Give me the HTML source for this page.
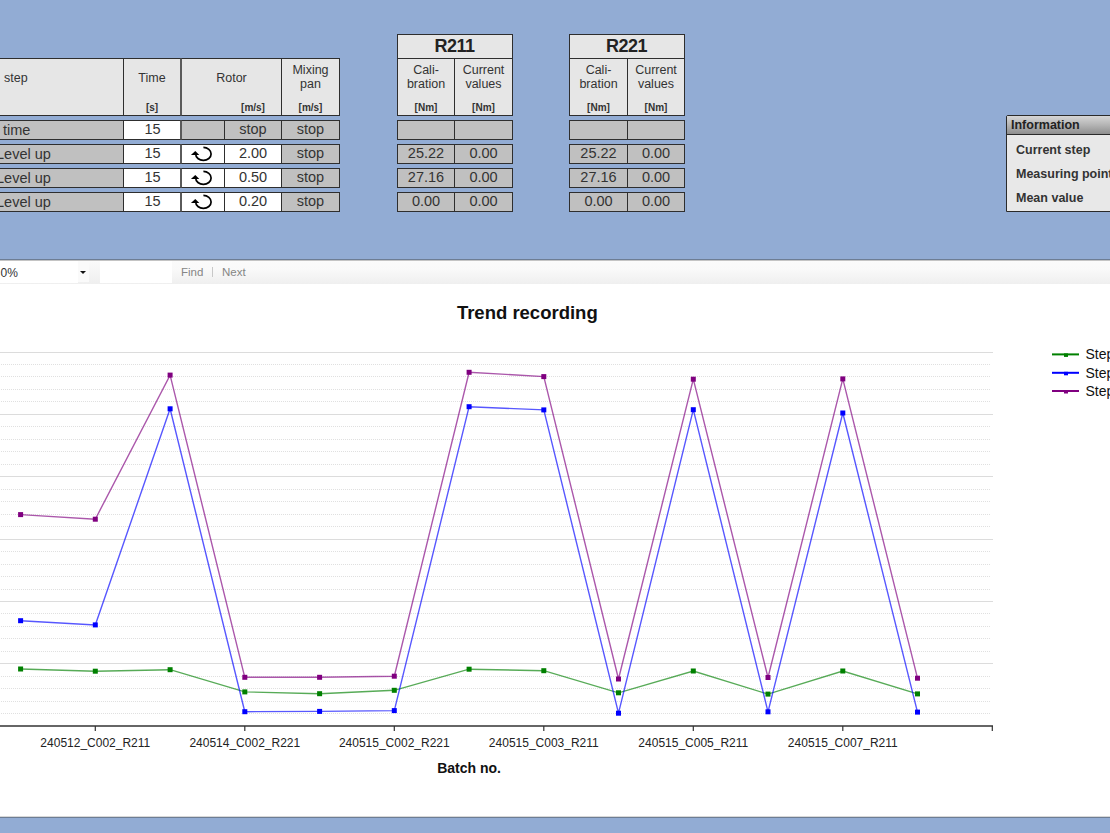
<!DOCTYPE html>
<html><head><meta charset="utf-8">
<style>
*{margin:0;padding:0;box-sizing:border-box}
html,body{width:1110px;height:833px;overflow:hidden;background:#92acd4;font-family:"Liberation Sans",sans-serif;color:#333}
.a{position:absolute}
.c{position:absolute;border:1px solid #2e2e2e;overflow:hidden;white-space:nowrap}
.hd{background:#e6e6e6}
.g{background:#c0c0c0}
.w{background:#fff}
.v{font-size:14.5px;line-height:17px;text-align:center;color:#333}
.ht{font-size:12.5px;margin-top:-1px;text-align:center;color:#333;position:absolute;left:0;right:0;line-height:14px}
.u{font-size:10px;margin-top:-2px;font-weight:bold;text-align:center;color:#333;position:absolute;left:0;right:0;line-height:11px}
</style></head><body>
<div class="c hd" style="left:-60px;top:58px;width:184px;height:58px"><div class="a" style="left:63px;top:12px;font-size:12.5px;color:#333">step</div></div>
<div class="c hd" style="left:123px;top:58px;width:58px;height:58px;border-right-color:#5a5a5a"><div class="ht" style="top:13px">Time</div><div class="u" style="top:103px;top:45px">[s]</div></div>
<div class="c hd" style="left:181px;top:58px;width:101px;height:58px;border-left-color:#5a5a5a"><div class="ht" style="top:13px">Rotor</div><div class="u" style="top:45px;left:43px">[m/s]</div></div>
<div class="c hd" style="left:281px;top:58px;width:59px;height:58px"><div class="ht" style="top:5px">Mixing<br>pan</div><div class="u" style="top:45px">[m/s]</div></div>
<div class="c g" style="left:-60px;top:120px;width:184px;height:20px"><div class="a v" style="left:62px;top:1px;text-align:left;font-size:14.5px">time</div></div>
<div class="c w v" style="left:123px;top:120px;width:58px;height:20px;border-right-color:#5a5a5a;padding-left:1px">15</div>
<div class="c g" style="left:181px;top:120px;width:44px;height:20px;border-left-color:#5a5a5a"></div>
<div class="c g v" style="left:224px;top:120px;width:58px;height:20px">stop</div>
<div class="c g v" style="left:281px;top:120px;width:59px;height:20px">stop</div>
<div class="c g" style="left:-60px;top:144px;width:184px;height:20px"><div class="a v" style="left:55px;top:1px;text-align:left;font-size:14.5px">Level up</div></div>
<div class="c w v" style="left:123px;top:144px;width:58px;height:20px;border-right-color:#5a5a5a;padding-left:1px">15</div>
<div class="c w" style="left:181px;top:144px;width:44px;height:20px;border-left-color:#5a5a5a"><svg width="42" height="18" viewBox="0 0 42 18" style="position:absolute;left:0;top:0">
<path d="M21.4 2.4 A7.7 6.5 0 1 1 13.7 8.9" fill="none" stroke="#000" stroke-width="1.7"/>
<path d="M8.9 10.1 L13.3 5.9 L17.3 10.1 Z" fill="#000"/>
</svg></div>
<div class="c w v" style="left:224px;top:144px;width:58px;height:20px">2.00</div>
<div class="c g v" style="left:281px;top:144px;width:59px;height:20px">stop</div>
<div class="c g" style="left:-60px;top:168px;width:184px;height:20px"><div class="a v" style="left:55px;top:1px;text-align:left;font-size:14.5px">Level up</div></div>
<div class="c w v" style="left:123px;top:168px;width:58px;height:20px;border-right-color:#5a5a5a;padding-left:1px">15</div>
<div class="c w" style="left:181px;top:168px;width:44px;height:20px;border-left-color:#5a5a5a"><svg width="42" height="18" viewBox="0 0 42 18" style="position:absolute;left:0;top:0">
<path d="M21.4 2.4 A7.7 6.5 0 1 1 13.7 8.9" fill="none" stroke="#000" stroke-width="1.7"/>
<path d="M8.9 10.1 L13.3 5.9 L17.3 10.1 Z" fill="#000"/>
</svg></div>
<div class="c w v" style="left:224px;top:168px;width:58px;height:20px">0.50</div>
<div class="c g v" style="left:281px;top:168px;width:59px;height:20px">stop</div>
<div class="c g" style="left:-60px;top:192px;width:184px;height:20px"><div class="a v" style="left:55px;top:1px;text-align:left;font-size:14.5px">Level up</div></div>
<div class="c w v" style="left:123px;top:192px;width:58px;height:20px;border-right-color:#5a5a5a;padding-left:1px">15</div>
<div class="c w" style="left:181px;top:192px;width:44px;height:20px;border-left-color:#5a5a5a"><svg width="42" height="18" viewBox="0 0 42 18" style="position:absolute;left:0;top:0">
<path d="M21.4 2.4 A7.7 6.5 0 1 1 13.7 8.9" fill="none" stroke="#000" stroke-width="1.7"/>
<path d="M8.9 10.1 L13.3 5.9 L17.3 10.1 Z" fill="#000"/>
</svg></div>
<div class="c w v" style="left:224px;top:192px;width:58px;height:20px">0.20</div>
<div class="c g v" style="left:281px;top:192px;width:59px;height:20px">stop</div>
<div class="c hd" style="left:397px;top:34px;width:116px;height:25px;font-size:18px;font-weight:bold;text-align:center;line-height:22px;color:#222;letter-spacing:-0.5px;text-indent:-1px">R211</div>
<div class="c hd" style="left:397px;top:58px;width:58px;height:58px"><div class="ht" style="top:5px;font-size:12.5px">Cali-<br>bration</div><div class="u" style="top:45px">[Nm]</div></div>
<div class="c hd" style="left:454px;top:58px;width:59px;height:58px"><div class="ht" style="top:5px;font-size:12.5px">Current<br>values</div><div class="u" style="top:45px">[Nm]</div></div>
<div class="c g v" style="left:397px;top:120px;width:58px;height:20px"></div>
<div class="c g v" style="left:454px;top:120px;width:59px;height:20px"></div>
<div class="c g v" style="left:397px;top:144px;width:58px;height:20px">25.22</div>
<div class="c g v" style="left:454px;top:144px;width:59px;height:20px">0.00</div>
<div class="c g v" style="left:397px;top:168px;width:58px;height:20px">27.16</div>
<div class="c g v" style="left:454px;top:168px;width:59px;height:20px">0.00</div>
<div class="c g v" style="left:397px;top:192px;width:58px;height:20px">0.00</div>
<div class="c g v" style="left:454px;top:192px;width:59px;height:20px">0.00</div>
<div class="c hd" style="left:569px;top:34px;width:116px;height:25px;font-size:18px;font-weight:bold;text-align:center;line-height:22px;color:#222;letter-spacing:-0.5px;text-indent:-1px">R221</div>
<div class="c hd" style="left:569px;top:58px;width:59px;height:58px"><div class="ht" style="top:5px;font-size:12.5px">Cali-<br>bration</div><div class="u" style="top:45px">[Nm]</div></div>
<div class="c hd" style="left:627px;top:58px;width:58px;height:58px"><div class="ht" style="top:5px;font-size:12.5px">Current<br>values</div><div class="u" style="top:45px">[Nm]</div></div>
<div class="c g v" style="left:569px;top:120px;width:59px;height:20px"></div>
<div class="c g v" style="left:627px;top:120px;width:58px;height:20px"></div>
<div class="c g v" style="left:569px;top:144px;width:59px;height:20px">25.22</div>
<div class="c g v" style="left:627px;top:144px;width:58px;height:20px">0.00</div>
<div class="c g v" style="left:569px;top:168px;width:59px;height:20px">27.16</div>
<div class="c g v" style="left:627px;top:168px;width:58px;height:20px">0.00</div>
<div class="c g v" style="left:569px;top:192px;width:59px;height:20px">0.00</div>
<div class="c g v" style="left:627px;top:192px;width:58px;height:20px">0.00</div>
<div class="a" style="left:1006px;top:115px;width:120px;height:97px;border:1px solid #2a2a2a;background:#e8e8e8;border-radius:2px 0 0 0">
<div class="a" style="left:0;top:0;right:0;height:19px;background:linear-gradient(#d6d6d6,#b4b4b4 50%,#8e8e8e);border-bottom:1px solid #2a2a2a;font-size:12.5px;font-weight:bold;color:#222;padding-left:4px;line-height:18px">Information</div>
<div class="a" style="left:9px;top:22px;font-size:12.5px;font-weight:bold;color:#333;line-height:24px">Current step<br>Measuring point<br>Mean value</div>
</div>
<div class="a" style="left:0;top:259px;width:1110px;height:1px;background:#6d7d94"></div>
<div class="a" style="left:0;top:260px;width:1110px;height:24px;background:linear-gradient(#fbfbfb,#f9f9f9 40%,#efefef)"></div>
<div class="a" style="left:0;top:260px;width:1110px;height:1px;background:#c4c4c4"></div>
<div class="a" style="left:0;top:261px;width:78px;height:22px;background:#fff"></div>
<div class="a" style="left:0.5px;top:266px;font-size:12px;color:#333;line-height:14px">0%</div>
<div class="a" style="left:78px;top:262px;width:11px;height:20px;background:#fafafa"></div>
<div class="a" style="left:80px;top:271px;width:0;height:0;border-left:3px solid transparent;border-right:3px solid transparent;border-top:3.5px solid #111"></div>
<div class="a" style="left:89px;top:262px;width:11px;height:21px;background:linear-gradient(#fafafa,#efefef)"></div>
<div class="a" style="left:100px;top:261px;width:72px;height:22px;background:#fff"></div>
<div class="a" style="left:181px;top:265px;font-size:11.5px;color:#858585;line-height:14px">Find</div>
<div class="a" style="left:212px;top:267px;width:1px;height:10px;background:#c8c8c8"></div>
<div class="a" style="left:222px;top:265px;font-size:11.5px;color:#858585;line-height:14px">Next</div>
<div class="a" style="left:0;top:284px;width:1110px;height:532px;background:#fff"></div>
<div class="a" style="left:0;top:816px;width:1110px;height:1px;background:#d8d8d8"></div>
<div class="a" style="left:0;top:817px;width:1110px;height:1px;background:#6d7d94"></div>
<svg class="a" style="left:0;top:0" width="1110" height="833" viewBox="0 0 1110 833" font-family="Liberation Sans, sans-serif">
<line x1="0" y1="352.5" x2="993" y2="352.5" stroke="#dcdcdc" stroke-width="1"/>
<line x1="1" y1="364.5" x2="991" y2="364.5" stroke="#e0e0e0" stroke-width="1" stroke-dasharray="1,1"/>
<line x1="1" y1="376.5" x2="991" y2="376.5" stroke="#e0e0e0" stroke-width="1" stroke-dasharray="1,1"/>
<line x1="1" y1="389.5" x2="991" y2="389.5" stroke="#e0e0e0" stroke-width="1" stroke-dasharray="1,1"/>
<line x1="1" y1="401.5" x2="991" y2="401.5" stroke="#e0e0e0" stroke-width="1" stroke-dasharray="1,1"/>
<line x1="0" y1="414.5" x2="993" y2="414.5" stroke="#dcdcdc" stroke-width="1"/>
<line x1="1" y1="426.5" x2="991" y2="426.5" stroke="#e0e0e0" stroke-width="1" stroke-dasharray="1,1"/>
<line x1="1" y1="439.5" x2="991" y2="439.5" stroke="#e0e0e0" stroke-width="1" stroke-dasharray="1,1"/>
<line x1="1" y1="451.5" x2="991" y2="451.5" stroke="#e0e0e0" stroke-width="1" stroke-dasharray="1,1"/>
<line x1="1" y1="464.5" x2="991" y2="464.5" stroke="#e0e0e0" stroke-width="1" stroke-dasharray="1,1"/>
<line x1="0" y1="476.5" x2="993" y2="476.5" stroke="#dcdcdc" stroke-width="1"/>
<line x1="1" y1="489.5" x2="991" y2="489.5" stroke="#e0e0e0" stroke-width="1" stroke-dasharray="1,1"/>
<line x1="1" y1="501.5" x2="991" y2="501.5" stroke="#e0e0e0" stroke-width="1" stroke-dasharray="1,1"/>
<line x1="1" y1="514.5" x2="991" y2="514.5" stroke="#e0e0e0" stroke-width="1" stroke-dasharray="1,1"/>
<line x1="1" y1="526.5" x2="991" y2="526.5" stroke="#e0e0e0" stroke-width="1" stroke-dasharray="1,1"/>
<line x1="0" y1="539.5" x2="993" y2="539.5" stroke="#dcdcdc" stroke-width="1"/>
<line x1="1" y1="551.5" x2="991" y2="551.5" stroke="#e0e0e0" stroke-width="1" stroke-dasharray="1,1"/>
<line x1="1" y1="564.5" x2="991" y2="564.5" stroke="#e0e0e0" stroke-width="1" stroke-dasharray="1,1"/>
<line x1="1" y1="576.5" x2="991" y2="576.5" stroke="#e0e0e0" stroke-width="1" stroke-dasharray="1,1"/>
<line x1="1" y1="589.5" x2="991" y2="589.5" stroke="#e0e0e0" stroke-width="1" stroke-dasharray="1,1"/>
<line x1="0" y1="601.5" x2="993" y2="601.5" stroke="#dcdcdc" stroke-width="1"/>
<line x1="1" y1="613.5" x2="991" y2="613.5" stroke="#e0e0e0" stroke-width="1" stroke-dasharray="1,1"/>
<line x1="1" y1="626.5" x2="991" y2="626.5" stroke="#e0e0e0" stroke-width="1" stroke-dasharray="1,1"/>
<line x1="1" y1="638.5" x2="991" y2="638.5" stroke="#e0e0e0" stroke-width="1" stroke-dasharray="1,1"/>
<line x1="1" y1="651.5" x2="991" y2="651.5" stroke="#e0e0e0" stroke-width="1" stroke-dasharray="1,1"/>
<line x1="0" y1="663.5" x2="993" y2="663.5" stroke="#dcdcdc" stroke-width="1"/>
<line x1="1" y1="676.5" x2="991" y2="676.5" stroke="#e0e0e0" stroke-width="1" stroke-dasharray="1,1"/>
<line x1="1" y1="688.5" x2="991" y2="688.5" stroke="#e0e0e0" stroke-width="1" stroke-dasharray="1,1"/>
<line x1="1" y1="701.5" x2="991" y2="701.5" stroke="#e0e0e0" stroke-width="1" stroke-dasharray="1,1"/>
<line x1="1" y1="713.5" x2="991" y2="713.5" stroke="#e0e0e0" stroke-width="1" stroke-dasharray="1,1"/>
<line x1="0" y1="726" x2="993" y2="726" stroke="#333" stroke-width="1.6"/>
<line x1="95.30" y1="726" x2="95.30" y2="731" stroke="#333" stroke-width="1.2"/>
<line x1="244.80" y1="726" x2="244.80" y2="731" stroke="#333" stroke-width="1.2"/>
<line x1="394.30" y1="726" x2="394.30" y2="731" stroke="#333" stroke-width="1.2"/>
<line x1="543.80" y1="726" x2="543.80" y2="731" stroke="#333" stroke-width="1.2"/>
<line x1="693.30" y1="726" x2="693.30" y2="731" stroke="#333" stroke-width="1.2"/>
<line x1="842.80" y1="726" x2="842.80" y2="731" stroke="#333" stroke-width="1.2"/>
<line x1="992.30" y1="726" x2="992.30" y2="731" stroke="#333" stroke-width="1.2"/>
<text x="95.3" y="747" text-anchor="middle" font-size="12" fill="#222">240512_C002_R211</text>
<text x="244.8" y="747" text-anchor="middle" font-size="12" fill="#222">240514_C002_R221</text>
<text x="394.3" y="747" text-anchor="middle" font-size="12" fill="#222">240515_C002_R221</text>
<text x="543.8" y="747" text-anchor="middle" font-size="12" fill="#222">240515_C003_R211</text>
<text x="693.3" y="747" text-anchor="middle" font-size="12" fill="#222">240515_C005_R211</text>
<text x="842.8" y="747" text-anchor="middle" font-size="12" fill="#222">240515_C007_R211</text>
<polyline points="20.6,669.0 95.3,671.2 170.1,669.7 244.8,691.9 319.6,693.7 394.3,690.3 469.1,669.2 543.8,670.7 618.5,692.8 693.3,671.0 768.0,694.1 842.8,671.0 917.5,693.9" fill="none" stroke="#008000" stroke-width="1.4" stroke-opacity="0.66"/>
<rect x="18.1" y="666.5" width="5" height="5" fill="#008000"/>
<rect x="92.8" y="668.7" width="5" height="5" fill="#008000"/>
<rect x="167.6" y="667.2" width="5" height="5" fill="#008000"/>
<rect x="242.3" y="689.4" width="5" height="5" fill="#008000"/>
<rect x="317.1" y="691.2" width="5" height="5" fill="#008000"/>
<rect x="391.8" y="687.8" width="5" height="5" fill="#008000"/>
<rect x="466.6" y="666.7" width="5" height="5" fill="#008000"/>
<rect x="541.3" y="668.2" width="5" height="5" fill="#008000"/>
<rect x="616.0" y="690.3" width="5" height="5" fill="#008000"/>
<rect x="690.8" y="668.5" width="5" height="5" fill="#008000"/>
<rect x="765.5" y="691.6" width="5" height="5" fill="#008000"/>
<rect x="840.3" y="668.5" width="5" height="5" fill="#008000"/>
<rect x="915.0" y="691.4" width="5" height="5" fill="#008000"/>
<polyline points="20.6,620.7 95.3,624.9 170.1,408.8 244.8,711.7 319.6,711.4 394.3,710.6 469.1,406.7 543.8,409.9 618.5,713.2 693.3,409.7 768.0,711.8 842.8,413.0 917.5,712.1" fill="none" stroke="#0000ff" stroke-width="1.4" stroke-opacity="0.66"/>
<rect x="18.1" y="618.2" width="5" height="5" fill="#0000ff"/>
<rect x="92.8" y="622.4" width="5" height="5" fill="#0000ff"/>
<rect x="167.6" y="406.3" width="5" height="5" fill="#0000ff"/>
<rect x="242.3" y="709.2" width="5" height="5" fill="#0000ff"/>
<rect x="317.1" y="708.9" width="5" height="5" fill="#0000ff"/>
<rect x="391.8" y="708.1" width="5" height="5" fill="#0000ff"/>
<rect x="466.6" y="404.2" width="5" height="5" fill="#0000ff"/>
<rect x="541.3" y="407.4" width="5" height="5" fill="#0000ff"/>
<rect x="616.0" y="710.7" width="5" height="5" fill="#0000ff"/>
<rect x="690.8" y="407.2" width="5" height="5" fill="#0000ff"/>
<rect x="765.5" y="709.3" width="5" height="5" fill="#0000ff"/>
<rect x="840.3" y="410.5" width="5" height="5" fill="#0000ff"/>
<rect x="915.0" y="709.6" width="5" height="5" fill="#0000ff"/>
<polyline points="20.6,514.6 95.3,519.2 170.1,375.1 244.8,677.3 319.6,677.3 394.3,676.2 469.1,372.3 543.8,376.6 618.5,679.0 693.3,379.2 768.0,677.5 842.8,378.9 917.5,678.2" fill="none" stroke="#800080" stroke-width="1.4" stroke-opacity="0.66"/>
<rect x="18.1" y="512.1" width="5" height="5" fill="#800080"/>
<rect x="92.8" y="516.7" width="5" height="5" fill="#800080"/>
<rect x="167.6" y="372.6" width="5" height="5" fill="#800080"/>
<rect x="242.3" y="674.8" width="5" height="5" fill="#800080"/>
<rect x="317.1" y="674.8" width="5" height="5" fill="#800080"/>
<rect x="391.8" y="673.7" width="5" height="5" fill="#800080"/>
<rect x="466.6" y="369.8" width="5" height="5" fill="#800080"/>
<rect x="541.3" y="374.1" width="5" height="5" fill="#800080"/>
<rect x="616.0" y="676.5" width="5" height="5" fill="#800080"/>
<rect x="690.8" y="376.7" width="5" height="5" fill="#800080"/>
<rect x="765.5" y="675.0" width="5" height="5" fill="#800080"/>
<rect x="840.3" y="376.4" width="5" height="5" fill="#800080"/>
<rect x="915.0" y="675.7" width="5" height="5" fill="#800080"/>
<text x="527.3" y="319" text-anchor="middle" font-size="18.5" font-weight="bold" fill="#111">Trend recording</text>
<text x="469.1" y="773" text-anchor="middle" font-size="14" font-weight="bold" fill="#111">Batch no.</text>
<rect x="1052" y="353.4" width="27" height="2" fill="#008000"/>
<rect x="1064" y="353.4" width="4" height="3.5" fill="#008000"/>
<text x="1085.5" y="359.4" font-size="14" fill="#111">Step</text>
<rect x="1052" y="371.8" width="27" height="2" fill="#0000ff"/>
<rect x="1064" y="371.8" width="4" height="3.5" fill="#0000ff"/>
<text x="1085.5" y="377.8" font-size="14" fill="#111">Step</text>
<rect x="1052" y="390.0" width="27" height="2" fill="#800080"/>
<rect x="1064" y="390.0" width="4" height="3.5" fill="#800080"/>
<text x="1085.5" y="396.0" font-size="14" fill="#111">Step</text>
</svg>
</body></html>
